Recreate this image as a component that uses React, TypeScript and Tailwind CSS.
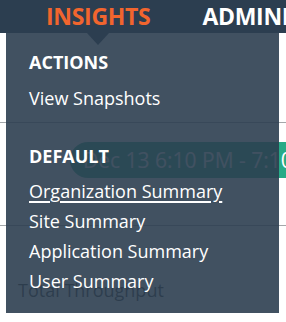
import React from "react";

export default function App() {
  const font = { fontFamily: '"Open Sans", "Noto Sans", sans-serif' };
  return (
    <div className="relative w-[286px] h-[322px] overflow-hidden bg-white" style={font}>
      {/* Top navigation */}
      <div className="h-[33px] bg-[#2c3e50] flex items-center whitespace-nowrap">
        <span className="ml-[46px] text-[23px] font-bold leading-[33px] text-[#f2652e] tracking-[-0.3px]">INSIGHTS</span>
        <span className="ml-[52px] text-[23px] font-bold leading-[33px] text-white tracking-[-0.3px]">ADMINISTRATION</span>
      </div>

      {/* Page content under the menu */}
      <div className="flex flex-col">
        <div className="h-[89px]" />
        <div className="h-px bg-[#a3a7aa]" />
        <div className="h-[19px]" />
        <div className="ml-[70px] h-[36px] rounded-l-full bg-[#27ab87] flex items-center pl-[13px] whitespace-nowrap">
          <span className="text-[21px] text-white leading-none">Dec 13 6:10 PM - 7:10 PM</span>
        </div>
        <div className="h-[47px]" />
        <div className="h-px bg-[#a3a7aa]" />
        <div className="h-[54px]" />
        <div className="ml-[18px] text-[18px] leading-[20px] text-[#3a3a3a] whitespace-nowrap">Total Throughput</div>
      </div>

      {/* Dropdown menu overlay */}
      <div className="absolute left-[6px] top-[33px] w-[273px] h-[280px] bg-[#2c3e50]/90">
        <div className="flex flex-col pl-[23px] pt-[14px] text-white text-[18px] leading-[30px] whitespace-nowrap">
          <div className="font-bold">ACTIONS</div>
          <div className="mt-[6px]">View Snapshots</div>
          <div className="mt-[28px] font-bold">DEFAULT</div>
          <div className="mt-[5px] underline underline-offset-[3px] decoration-[1.5px]">Organization Summary</div>
          <div>Site Summary</div>
          <div>Application Summary</div>
          <div>User Summary</div>
        </div>
      </div>

      {/* Caret */}
      <div className="absolute left-[87px] top-[33px] w-0 h-0 border-l-[11px] border-r-[11px] border-t-[12px] border-l-transparent border-r-transparent border-t-[#2c3e50]" />
    </div>
  );
}
